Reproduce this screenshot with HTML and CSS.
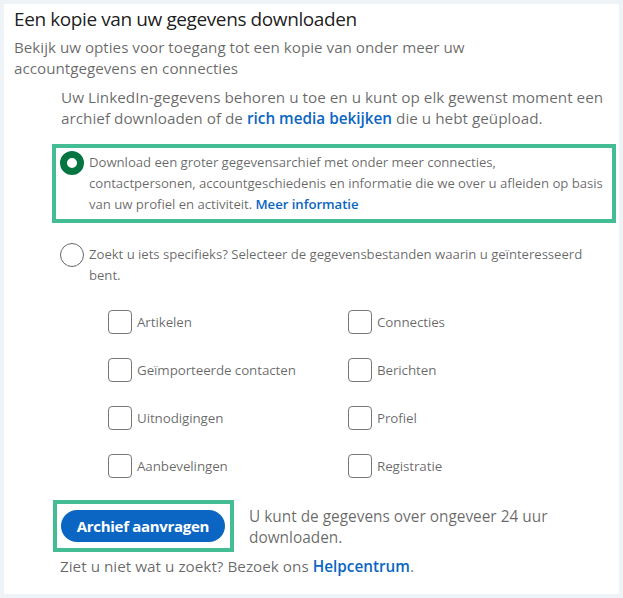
FILE: index.html
```html
<!DOCTYPE html>
<html lang="nl">
<head>
<meta charset="utf-8">
<title>Een kopie van uw gegevens downloaden</title>
<link rel="stylesheet" href="styles.css">
</head>
<body>
<main class="card">
  <h1 class="title">Een kopie van uw gegevens downloaden</h1>
  <p class="subtitle">Bekijk uw opties voor toegang tot een kopie van onder meer uw<br>accountgegevens en connecties</p>
  <div class="content">
    <p class="intro">Uw LinkedIn-gegevens behoren u toe en u kunt op elk gewenst moment een<br>archief downloaden of de <a class="link" href="#">rich media bekijken</a> die u hebt geüpload.</p>

    <div class="option option-selected">
      <span class="radio radio-on"></span>
      <p class="option-text">Download een groter gegevensarchief met onder meer connecties,<br>contactpersonen, accountgeschiedenis en informatie die we over u afleiden op basis<br>van uw profiel en activiteit. <a class="link" href="#">Meer informatie</a></p>
    </div>

    <div class="option option-plain">
      <span class="radio"></span>
      <p class="option-text">Zoekt u iets specifieks? Selecteer de gegevensbestanden waarin u geïnteresseerd<br>bent.</p>
    </div>

    <div class="checks">
      <label class="check"><span class="box"></span>Artikelen</label>
      <label class="check"><span class="box"></span>Connecties</label>
      <label class="check"><span class="box"></span>Geïmporteerde contacten</label>
      <label class="check"><span class="box"></span>Berichten</label>
      <label class="check"><span class="box"></span>Uitnodigingen</label>
      <label class="check"><span class="box"></span>Profiel</label>
      <label class="check"><span class="box"></span>Aanbevelingen</label>
      <label class="check"><span class="box"></span>Registratie</label>
    </div>

    <div class="actions">
      <div class="btn-frame"><button class="btn" type="button">Archief aanvragen</button></div>
      <p class="note">U kunt de gegevens over ongeveer 24 uur<br>downloaden.</p>
    </div>
    <p class="help">Ziet u niet wat u zoekt? Bezoek ons <a class="link" href="#">Helpcentrum</a>.</p>
  </div>
</main>
</body>
</html>
```

FILE: styles.css
```css
* { box-sizing: border-box; }
html, body { margin: 0; padding: 0; }
body {
  background: #eef3f8;
  font-family: "Open Sans", "Noto Sans", sans-serif;
  color: rgba(0,0,0,0.6);
  width: 623px;
  height: 598px;
  overflow: hidden;
}
.card {
  margin: 4px;
  background: #fff;
  height: 590px;
  padding: 1px 10px 0 10px;
}
.title {
  margin: 0;
  font-size: 19px;
  font-weight: 400;
  line-height: 28px;
  color: rgba(0,0,0,0.9);
  letter-spacing: -0.4px;
}
.subtitle {
  margin: 4px 0 0;
  font-size: 15.2px;
  line-height: 21px;
  letter-spacing: 0;
}
.content { margin-left: 38px; margin-right: -7px; }
.intro {
  margin: 8px 0 0;
  padding-left: 9px;
  font-size: 15.3px;
  line-height: 21px;
  letter-spacing: 0;
}
.link { color: #0a66c2; font-weight: 600; text-decoration: none; }
.option {
  display: flex;
  align-items: flex-start;
  gap: 5px;
}
.option-selected {
  margin-top: 15px;
  border: 4px solid #45bd94;
  padding: 4px 4px;
}
.option-plain {
  margin-top: 21px;
  padding-left: 8px;
}
.option-text {
  margin: 0;
  font-size: 13.2px;
  line-height: 21px;
  letter-spacing: -0.05px;
  white-space: nowrap;
}
.radio {
  flex: none;
  width: 24px;
  height: 24px;
  border-radius: 50%;
  border: 1px solid #666;
  margin-top: -1px;
}
.radio-on {
  border: 7px solid #057642;
}
.checks {
  display: grid;
  grid-template-columns: 240px 240px;
  row-gap: 24px;
  padding-left: 56px;
  margin-top: 24px;
}
.check {
  display: flex;
  align-items: center;
  gap: 5px;
  height: 24px;
  font-size: 13.4px;
  letter-spacing: -0.1px;
}
.box {
  flex: none;
  width: 24px;
  height: 24px;
  border: 1px solid #767676;
  border-radius: 4px;
}
.actions {
  display: flex;
  align-items: flex-start;
  gap: 15px;
  margin-top: 22px;
  margin-left: 1px;
}
.btn-frame {
  border: 4px solid #45bd94;
  padding: 6px 5px 6px 4px;
}
.btn {
  display: block;
  height: 32px;
  width: 164px;
  border: none;
  border-radius: 16px;
  background: #0a66c2;
  color: #fff;
  font-family: inherit;
  font-size: 15px;
  font-weight: 700;
  letter-spacing: -0.3px;
  padding: 0;
}
.note {
  margin: 6px 0 0;
  font-size: 15.4px;
  line-height: 21px;
  letter-spacing: 0;
}
.help {
  margin: 4px 0 0;
  padding-left: 8px;
  font-size: 15.3px;
  line-height: 21px;
  letter-spacing: 0;
}
```
